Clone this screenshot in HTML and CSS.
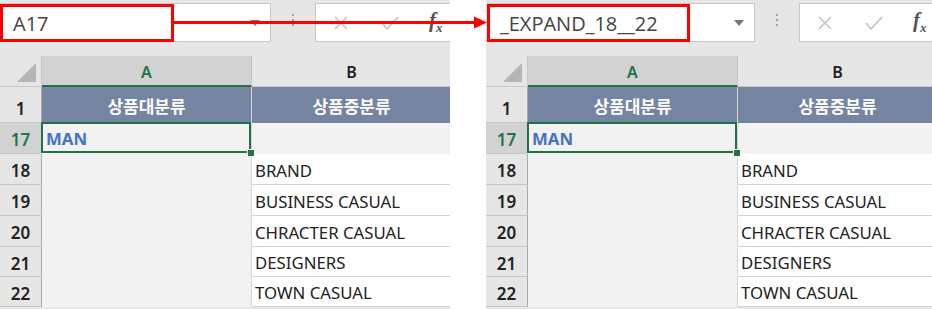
FILE: index.html
```html
<!DOCTYPE html>
<html lang="ko">
<head>
    <meta charset="UTF-8">
    <title>Name Box</title>
    <link rel="stylesheet" href="styles.css">
</head>
<body>
    <div class="panel">
        <div class="toolbar">
            <div class="namebox">
                <span class="mark mark-left">A17</span>
                <svg class="drop" width="10" height="6" viewBox="0 0 10 6"><path d="M0 0h10L5 6z" fill="#777"/></svg>
            </div>
            <div class="dots"><i></i><i></i><i></i></div>
            <div class="formula">
                <svg width="16" height="16" viewBox="0 0 16 16"><path d="M2 2l12 12M14 2L2 14" stroke="#c4c4c4" stroke-width="1.6" fill="none"/></svg>
                <svg width="20" height="16" viewBox="0 0 20 16"><path d="M2 8l5 6L18 2" stroke="#c4c4c4" stroke-width="1.8" fill="none"/></svg>
                <span class="fx">f<sub>x</sub></span>
            </div>
        </div>
        <div class="sheet">
            <div class="corner"><span></span></div>
            <div class="colhead sel">A</div>
            <div class="colhead">B</div>

            <div class="rowhead tall">1</div>
            <div class="title">상품대분류</div>
            <div class="title">상품중분류</div>

            <div class="rowhead sel">17</div>
            <div class="cell grey active">MAN<span class="handle"></span></div>
            <div class="cell grey"></div>

            <div class="rowhead">18</div>
            <div class="cell grey"></div>
            <div class="cell">BRAND</div>
            <div class="rowhead">19</div>
            <div class="cell grey"></div>
            <div class="cell">BUSINESS CASUAL</div>
            <div class="rowhead">20</div>
            <div class="cell grey"></div>
            <div class="cell">CHRACTER CASUAL</div>
            <div class="rowhead">21</div>
            <div class="cell grey"></div>
            <div class="cell">DESIGNERS</div>
            <div class="rowhead">22</div>
            <div class="cell grey"></div>
            <div class="cell">TOWN CASUAL</div>
        </div>
    </div>

    <div class="panel right">
        <div class="toolbar">
            <div class="namebox">
                <span class="mark mark-right">_EXPAND_18__22</span>
                <svg class="drop" width="10" height="6" viewBox="0 0 10 6"><path d="M0 0h10L5 6z" fill="#777"/></svg>
            </div>
            <div class="dots"><i></i><i></i><i></i></div>
            <div class="formula">
                <svg width="16" height="16" viewBox="0 0 16 16"><path d="M2 2l12 12M14 2L2 14" stroke="#c4c4c4" stroke-width="1.6" fill="none"/></svg>
                <svg width="20" height="16" viewBox="0 0 20 16"><path d="M2 8l5 6L18 2" stroke="#c4c4c4" stroke-width="1.8" fill="none"/></svg>
                <span class="fx">f<sub>x</sub></span>
            </div>
        </div>
        <div class="sheet">
            <div class="corner"><span></span></div>
            <div class="colhead sel">A</div>
            <div class="colhead">B</div>

            <div class="rowhead tall">1</div>
            <div class="title">상품대분류</div>
            <div class="title">상품중분류</div>

            <div class="rowhead sel">17</div>
            <div class="cell grey active">MAN<span class="handle"></span></div>
            <div class="cell grey"></div>

            <div class="rowhead">18</div>
            <div class="cell grey"></div>
            <div class="cell">BRAND</div>
            <div class="rowhead">19</div>
            <div class="cell grey"></div>
            <div class="cell">BUSINESS CASUAL</div>
            <div class="rowhead">20</div>
            <div class="cell grey"></div>
            <div class="cell">CHRACTER CASUAL</div>
            <div class="rowhead">21</div>
            <div class="cell grey"></div>
            <div class="cell">DESIGNERS</div>
            <div class="rowhead">22</div>
            <div class="cell grey"></div>
            <div class="cell">TOWN CASUAL</div>
        </div>
    </div>

    <!-- arrow from the left name box to the right one -->
    <svg class="arrow" width="320" height="16" viewBox="0 0 320 16">
        <path d="M0 7.5h302" stroke="#f00" stroke-width="3"/>
        <path d="M300 1.5l13 6-13 6z" fill="#f00"/>
    </svg>
</body>
</html>
```

FILE: styles.css
```css
body {
    margin: 0;
    display: flex;
    gap: 36px;
    background: #fff;
    font-family: "Noto Sans", "Noto Sans CJK KR", sans-serif;
    position: relative;
    width: 932px;
    height: 309px;
    overflow: hidden;
}

.panel {
    width: 450px;
    height: 309px;
    overflow: hidden;
    background: #e6e6e6;
    flex-shrink: 0;
}

.panel.right {
    width: 446px;
}

.toolbar {
    height: 56px;
    display: flex;
    align-items: flex-start;
    padding-top: 3px;
    box-sizing: border-box;
}

.namebox {
    width: 271px;
    height: 39px;
    background: #fff;
    border: 1px solid #c8c8c8;
    box-sizing: border-box;
    display: flex;
    align-items: center;
    position: relative;
    flex-shrink: 0;
}

.right .namebox {
    margin-left: 1px;
    width: 268px;
}

.mark {
    height: 38px;
    border: 3px solid #f00;
    box-sizing: border-box;
    margin-top: 1px;
    margin-left: -1px;
    display: flex;
    align-items: center;
    padding-left: 10px;
    font-family: "Open Sans", "Noto Sans", sans-serif;
    font-size: 20px;
    color: #444;
}

.mark-left {
    width: 174px;
}

.mark-right {
    width: 203px;
}

.drop {
    position: absolute;
    right: 10px;
    top: 16px;
}

.dots {
    width: 44px;
    display: flex;
    flex-direction: column;
    align-items: center;
    gap: 3px;
    padding-top: 11px;
    flex-shrink: 0;
}

.dots i {
    width: 2px;
    height: 2px;
    background: #a0a0a0;
}

.formula {
    width: 200px;
    height: 39px;
    background: #fff;
    border: 1px solid #c8c8c8;
    box-sizing: border-box;
    display: flex;
    align-items: center;
    gap: 31px;
    padding-left: 17px;
    flex-shrink: 0;
}

.fx {
    font-family: "Liberation Serif", serif;
    font-style: italic;
    font-weight: bold;
    font-size: 21px;
    color: #555;
    margin-left: -2px;
}

.fx sub {
    font-size: 13px;
}

.sheet {
    display: grid;
    grid-template-columns: 42px 210px 200px;
    grid-template-rows: 31px 36px 31px 31px 31px 31px 30px 30px;
}

.corner {
    background: #e6e6e6;
    border-right: 1px solid #c6c6c6;
    border-bottom: 1px solid #c6c6c6;
    position: relative;
}

.corner span {
    position: absolute;
    right: 5px;
    bottom: 4px;
    width: 0;
    height: 0;
    border-left: 19px solid transparent;
    border-bottom: 19px solid #b5b5b5;
}

.colhead {
    background: #e6e6e6;
    border-right: 1px solid #c6c6c6;
    border-bottom: 1px solid #c6c6c6;
    display: flex;
    align-items: center;
    justify-content: center;
    font-size: 16px;
    font-weight: 600;
    color: #222;
    padding-top: 2px;
}

.colhead.sel {
    background: #d2d2d2;
    color: #217346;
    border-bottom: 2px solid #217346;
}

.rowhead {
    background: #e6e6e6;
    border-right: 1px solid #ababab;
    border-bottom: 1px solid #c6c6c6;
    display: flex;
    align-items: center;
    justify-content: center;
    font-size: 17px;
    font-weight: 600;
    color: #222;
    padding-top: 3px;
}

.rowhead.tall {
    align-items: flex-end;
    padding-bottom: 2px;
}

.rowhead.sel {
    background: #d2d2d2;
    color: #217346;
}

.title {
    background: #7584a0;
    border-right: 1px solid #d4d4d4;
    display: flex;
    align-items: center;
    justify-content: center;
    color: #fff;
    font-family: "Noto Sans CJK KR", sans-serif;
    font-weight: bold;
    font-size: 17px;
}

.cell {
    background: #fff;
    border-right: 1px solid #d4d4d4;
    border-bottom: 1px solid #d4d4d4;
    display: flex;
    align-items: center;
    padding: 2px 0 0 3px;
    font-size: 16.8px;
    color: #222;
    white-space: nowrap;
}

.cell.grey {
    background: #f2f2f2;
    border-bottom-color: #f2f2f2;
}

.cell.active {
    position: relative;
    box-shadow: inset 0 0 0 2px #217346;
    margin: -1px 0 0 -1px;
    padding-left: 5px;
    color: #4472c4;
    font-weight: bold;
}

.handle {
    position: absolute;
    right: -4px;
    bottom: -4px;
    width: 6px;
    height: 6px;
    background: #217346;
    border: 1px solid #fff;
    z-index: 2;
}

.arrow {
    position: absolute;
    left: 174px;
    top: 15px;
}
```
